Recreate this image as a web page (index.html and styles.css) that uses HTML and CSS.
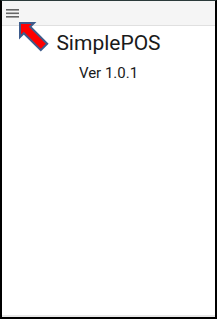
FILE: index.html
```html
<!DOCTYPE html>
<html>
<head>
<meta charset="utf-8">
<link rel="stylesheet" href="styles.css">
</head>
<body>
<div class="frame">
  <header class="appbar">
    <svg class="menu" width="13" height="9" viewBox="0 0 13 9">
      <rect x="0" y="0" width="13" height="1.6" fill="#666"/>
      <rect x="0" y="3.5" width="13" height="1.6" fill="#666"/>
      <rect x="0" y="7" width="13" height="1.6" fill="#666"/>
    </svg>
  </header>
  <main class="content">
    <h1 class="title">SimplePOS</h1>
    <p class="version">Ver 1.0.1</p>
  </main>
  <svg class="pointer" width="34" height="34" viewBox="0 0 34 34">
    <polygon points="2,2 16,2 12.2,5.8 29.2,22.8 22.8,29.2 5.8,12.2 2,16" fill="#ff0000" stroke="#3d5c8c" stroke-width="2" stroke-linejoin="miter"/>
  </svg>
</div>
</body>
</html>
```
FILE: styles.css
```css
html, body {
  margin: 0;
  padding: 0;
  background: #fff;
}
.frame {
  position: relative;
  box-sizing: border-box;
  width: 217px;
  height: 319px;
  border: 2px solid #000;
  border-top: 1px solid #2b3a3a;
  display: flex;
  flex-direction: column;
  font-family: Roboto, "Noto Sans", sans-serif;
  color: #1a1a1a;
}
.frame::after {
  content: "";
  position: absolute;
  left: 0;
  right: 0;
  bottom: 0;
  height: 2px;
  background: #e8e8e8;
}
.appbar {
  height: 24px;
  background: #f5f5f5;
  border-bottom: 1px solid #e0e0e0;
  display: flex;
  align-items: center;
  padding-left: 4px;
  flex-shrink: 0;
}
.menu {
  display: block;
  margin-top: 1px;
}
.content {
  flex: 1;
  display: flex;
  flex-direction: column;
  align-items: center;
}
.title {
  margin: 5px 0 0;
  font-size: 21px;
  line-height: 24px;
  font-weight: 400;
}
.version {
  margin: 8px 0 0;
  font-size: 15px;
  line-height: 20px;
}
.pointer {
  position: absolute;
  left: 16px;
  top: 20px;
}
```
